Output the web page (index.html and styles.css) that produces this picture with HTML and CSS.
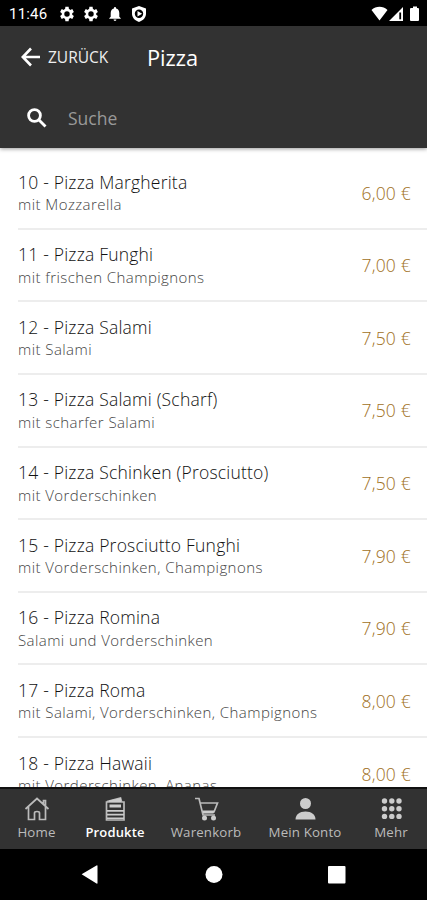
FILE: index.html
```html
<!DOCTYPE html>
<html lang="de">
<head>
<meta charset="utf-8">
<title>Pizza</title>
<link rel="stylesheet" href="styles.css">
</head>
<body>
<div class="status">
  <span class="clock">11:46</span>
  <svg class="gear" viewBox="2.900 2 20 20"><path d="M19.400 13a7.500 7.500 0 0 0 0-2l2.100-1.600-2-3.500-2.500 1a7.400 7.400 0 0 0-1.700-1L14.900 3h-4l-.4 2.900a7.400 7.400 0 0 0-1.700 1l-2.500-1-2 3.500L6.400 11a7.500 7.500 0 0 0 0 2l-2.100 1.600 2 3.500 2.500-1a7.400 7.400 0 0 0 1.700 1l.4 2.900h4l.4-2.900a7.400 7.400 0 0 0 1.700-1l2.500 1 2-3.500zM12.900 15.400a3.400 3.400 0 1 1 0-6.800 3.400 3.400 0 0 1 0 6.800z" fill-rule="evenodd"/></svg>
  <svg class="gear" viewBox="2.900 2 20 20"><path d="M19.400 13a7.500 7.500 0 0 0 0-2l2.100-1.600-2-3.500-2.500 1a7.400 7.400 0 0 0-1.700-1L14.900 3h-4l-.4 2.900a7.400 7.400 0 0 0-1.700 1l-2.500-1-2 3.500L6.400 11a7.500 7.500 0 0 0 0 2l-2.100 1.600 2 3.500 2.500-1a7.400 7.400 0 0 0 1.700 1l.4 2.900h4l.4-2.900a7.400 7.400 0 0 0 1.700-1l2.500 1 2-3.500zM12.900 15.400a3.400 3.400 0 1 1 0-6.800 3.400 3.400 0 0 1 0 6.800z" fill-rule="evenodd"/></svg>
  <svg class="bell" viewBox="4 2.500 16 19.500"><path d="M12 22a2 2 0 0 0 2-2h-4a2 2 0 0 0 2 2zm6-6v-5c0-3.100-1.600-5.600-4.500-6.300V4a1.500 1.500 0 0 0-3 0v.7C7.600 5.400 6 7.900 6 11v5l-2 2v1h16v-1z"/></svg>
  <svg class="shield" viewBox="0 0 14 16"><path fill-rule="evenodd" d="M7 0l7 2.600v5.200c0 3.600-2.700 6.700-7 8.200-4.300-1.500-7-4.600-7-8.200V2.600zM7 3.600a4.200 4.200 0 1 0 0 8.400 4.200 4.200 0 0 0 0-8.400zM5.500 5l4.600 2.800-4.600 2.800z"/></svg>
  <svg class="signals" viewBox="0 0 50 16"><path d="M.5 4C5-.3 12-.3 16.500 4L8.500 14.500zM18 15L32 1v14z"/><path d="M28.300 6.500h1.800v6.800h-1.800z" fill="#000"/><path d="M39 3q0-1 1-1h2V.5h4V2h1q1 0 1 1v11q0 1-1 1h-7q-1 0-1-1z"/></svg>
</div>
<header>
  <div class="bar">
    <svg class="arrow" viewBox="0 0 20 20"><path d="M19 10H2M10 1.500L1.800 10l8.200 8.500"/></svg>
    <span class="back">ZURÜCK</span>
    <h1>Pizza</h1>
  </div>
  <div class="search">
    <svg class="lens" viewBox="0 0 20 20"><circle cx="7.500" cy="7.500" r="5.900"/><path d="M12 12l6.500 6.500"/></svg>
    <span>Suche</span>
  </div>
</header>
<main>
  <div class="row"><div><h2>10 - Pizza Margherita</h2><p>mit Mozzarella</p></div><span class="price">6,00 €</span></div>
  <div class="row"><div><h2>11 - Pizza Funghi</h2><p>mit frischen Champignons</p></div><span class="price">7,00 €</span></div>
  <div class="row"><div><h2>12 - Pizza Salami</h2><p>mit Salami</p></div><span class="price">7,50 €</span></div>
  <div class="row"><div><h2>13 - Pizza Salami (Scharf)</h2><p>mit scharfer Salami</p></div><span class="price">7,50 €</span></div>
  <div class="row"><div><h2>14 - Pizza Schinken (Prosciutto)</h2><p>mit Vorderschinken</p></div><span class="price">7,50 €</span></div>
  <div class="row"><div><h2>15 - Pizza Prosciutto Funghi</h2><p>mit Vorderschinken, Champignons</p></div><span class="price">7,90 €</span></div>
  <div class="row"><div><h2>16 - Pizza Romina</h2><p>Salami und Vorderschinken</p></div><span class="price">7,90 €</span></div>
  <div class="row"><div><h2>17 - Pizza Roma</h2><p>mit Salami, Vorderschinken, Champignons</p></div><span class="price">8,00 €</span></div>
  <div class="row"><div><h2>18 - Pizza Hawaii</h2><p>mit Vorderschinken, Ananas</p></div><span class="price">8,00 €</span></div>
</main>
<nav class="tabs">
  <div class="tab"><svg viewBox="0 0 26 24"><path class="line" d="M1.500 12L13 1.500 24.500 12M4.500 10v12.500h6V16q0-1.500 2.500-1.500t2.500 1.500v6.500h6V10M19.500 7V3.500h2V9"/></svg><span>Home</span></div>
  <div class="tab active"><svg viewBox="0 0 26 24"><path class="line" d="M4.500 5H22v18H4.500zM5 4.500L18.500 1l1 3.500"/><path d="M7 3.500L19 1v4H7zM7.500 7.500H19v3H7.500zM5 13h17v1.800H5zM5 16.800h17v1.600H5zM5 20.500h17v1.500H5z"/></svg><span>Produkte</span></div>
  <div class="tab"><svg viewBox="0 0 26 24"><path class="line" d="M2 1.500h4L10 18h12M7.500 6H24.500l-3.500 9-12 .5"/><path d="M9.500 13.500H21.500l-1 3H10z"/><circle cx="11.500" cy="21" r="2.500"/><circle cx="20.500" cy="21" r="2.500"/></svg><span>Warenkorb</span></div>
  <div class="tab"><svg viewBox="0 0 26 24"><circle cx="13.500" cy="6.500" r="5.500"/><path d="M3.500 22.500c0-5 4-8 10-8s10 3 10 8z"/></svg><span>Mein Konto</span></div>
  <div class="tab"><svg viewBox="0 0 26 24"><g><circle cx="6.500" cy="4" r="2.700"/><circle cx="13.800" cy="4" r="2.700"/><circle cx="21" cy="4" r="2.700"/><circle cx="6.500" cy="11.700" r="2.700"/><circle cx="13.800" cy="11.700" r="2.700"/><circle cx="21" cy="11.700" r="2.700"/><circle cx="6.500" cy="19.400" r="2.700"/><circle cx="13.800" cy="19.400" r="2.700"/><circle cx="21" cy="19.400" r="2.700"/></g></svg><span>Mehr</span></div>
</nav>
<div class="system">
  <svg viewBox="0 0 427 51"><path d="M82 25L96.500 16.500q1-.5 1 .5v17q0 1-1 .5L82 25.500q-.5-.3 0-.5z"/><circle cx="214" cy="25.500" r="8.500"/><rect x="328" y="17" width="17.500" height="17.500" rx="1"/></svg>
</div>
</body>
</html>
```
FILE: styles.css
```css
* { box-sizing: border-box; }
body {
  margin: 0;
  width: 427px;
  height: 900px;
  overflow: hidden;
  display: flex;
  flex-direction: column;
  background: #fff;
  font-family: "Open Sans", sans-serif;
}
svg { display: block; flex: none; }
h1, h2, p { margin: 0; font-weight: 400; white-space: nowrap; }

.status {
  flex: none;
  height: 26px;
  padding: 2px 3px 0 9px;
  background: #000;
  color: #fff;
  display: flex;
  align-items: center;
  font: 400 15px/26px Roboto, sans-serif;
}
.status svg { fill: #fff; }
.clock { width: 50px; letter-spacing: .2px; }
.gear { width: 16px; height: 16px; margin-right: 8px; }
.bell { width: 12px; height: 14px; margin: 0 11px 0 2px; }
.shield { width: 14px; height: 16px; }
.signals { width: 50px; height: 16px; margin-left: auto; margin-right: 3px; }

header {
  flex: none;
  height: 122px;
  background: #323232;
  color: #fff;
  box-shadow: 0 1px 4px rgba(0, 0, 0, .4);
}
.bar { height: 62px; padding-left: 21px; display: flex; align-items: center; }
.arrow { width: 20px; height: 20px; fill: none; stroke: #fff; stroke-width: 2.6; }
.back { width: 99px; margin-left: 7px; font-size: 15.5px; color: #eee; }
h1 { font-size: 21.8px; line-height: 28px; padding-top: 1px; }
.search { height: 60px; padding-left: 27px; display: flex; align-items: center; font-size: 17.5px; color: #999; }
.lens { width: 20px; height: 20px; margin-right: 21px; fill: none; stroke: #fff; stroke-width: 2.8; }

main { flex: 1; min-height: 0; overflow: hidden; padding-top: 9px; }
.row {
  height: 72.65px;
  margin-left: 18px;
  padding: 13.5px 16px 0 0;
  border-bottom: 2px solid #ededed;
  display: flex;
  justify-content: space-between;
}
h2 { font-size: 17.5px; line-height: 22.5px; color: #111; font-weight: 300; letter-spacing: .21px; }
.row p { font-size: 15px; line-height: 22px; color: #444; font-weight: 300; letter-spacing: .43px; }
.price { font-size: 17.5px; line-height: 45.5px; color: #a0701c; font-weight: 300; letter-spacing: .2px; }

.tabs {
  flex: none;
  height: 62px;
  border-top: 2px solid #111;
  background: #323232;
  display: grid;
  grid-template-columns: 73px 84px 98px 100px 72px;
  color: #bbb;
}
.tab { display: flex; flex-direction: column; align-items: center; padding-top: 8px; font-size: 13.3px; letter-spacing: .15px; line-height: 18px; white-space: nowrap; }
.tab svg { width: 26px; height: 24px; fill: #ccc; margin-bottom: 2px; }
.tab .line { fill: none; stroke: #bbb; stroke-width: 1.7; }
.active { color: #fff; font-weight: 600; font-size: 13px; }

.system { flex: none; height: 51px; background: #000; }
.system svg { width: 427px; height: 51px; fill: #fff; }
```
